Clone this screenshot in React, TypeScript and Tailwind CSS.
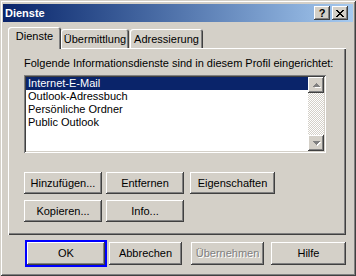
import React from "react";

const bevel =
  "shadow-[inset_-1px_-1px_#404040,inset_1px_1px_#ffffff,inset_-2px_-2px_#808080,inset_2px_2px_#d4d0c8]";

function Button({
  label,
  className = "",
  disabled = false,
}: {
  label: string;
  className?: string;
  disabled?: boolean;
}) {
  return (
    <div
      className={`flex items-center justify-center bg-[#d4d0c8] ${bevel} ${className}`}
    >
      <span
        className={
          disabled
            ? "text-[#808080] [text-shadow:1px_1px_0_#ffffff]"
            : "text-black"
        }
      >
        {label}
      </span>
    </div>
  );
}

function ScrollArrow({ up }: { up?: boolean }) {
  return (
    <div className={`flex h-[16px] w-[16px] items-center justify-center bg-[#d4d0c8] ${bevel}`}>
      <svg width="9" height="6" viewBox="0 0 9 6">
        {up ? (
          <>
            <path d="M4 1h1v1h1v1h1v1h1v1H2V4h1V3h1z" fill="#ffffff" transform="translate(1 1)" />
            <path d="M4 1h1v1h1v1h1v1h1v1H1V4h1V3h1V2h1z" fill="#808080" />
          </>
        ) : (
          <>
            <path d="M1 1h7v1H7v1H6v1H5v1H4V4H3V3H2V2H1z" fill="#ffffff" transform="translate(1 1)" />
            <path d="M1 1h7v1H7v1H6v1H5v1H4V4H3V3H2V2H1z" fill="#808080" />
          </>
        )}
      </svg>
    </div>
  );
}

function Tab({
  label,
  active,
  className,
}: {
  label: string;
  active?: boolean;
  className: string;
}) {
  return (
    <div
      className={`flex items-center justify-center rounded-t-[3px] bg-[#d4d0c8] shadow-[inset_1px_1px_#ffffff,inset_-1px_0_#404040,inset_-2px_0_#808080] ${
        active ? "z-10 mb-[-1px] h-[22px] pb-[3px]" : "h-[19px] pt-[1px]"
      } ${className}`}
    >
      {label}
    </div>
  );
}

export default function App() {
  const items = ["Internet-E-Mail", "Outlook-Adressbuch", "Persönliche Ordner", "Public Outlook"];

  return (
    <div
      className="flex h-[276px] w-[356px] flex-col bg-[#d4d0c8] px-[3px] pt-[4px] text-[11px] leading-[13px] text-black shadow-[inset_1px_1px_#d4d0c8,inset_-1px_-1px_#404040,inset_2px_2px_#ffffff,inset_-2px_-2px_#808080]"
      style={{ fontFamily: '"Liberation Sans", Arial, sans-serif' }}
    >
      {/* Title bar */}
      <div className="flex h-[18px] items-center justify-between bg-gradient-to-r from-[#0a246a] to-[#a6caf0] pl-[2px] pr-[5px]">
        <span className="font-bold text-white">Dienste</span>
        <div className="flex gap-[2px]">
          <div className={`flex h-[14px] w-[16px] items-center justify-center bg-[#d4d0c8] font-bold ${bevel}`}>
            ?
          </div>
          <div className={`flex h-[14px] w-[16px] items-center justify-center bg-[#d4d0c8] ${bevel}`}>
            <svg width="8" height="7" viewBox="0 0 8 7">
              <path d="M0 0L7 7M1 0L8 7M7 0L0 7M8 0L1 7" stroke="#000" strokeWidth="1" />
            </svg>
          </div>
        </div>
      </div>

      <div className="flex flex-col pl-[5px] pt-[5px]">
        {/* Tabs */}
        <div className="flex h-[21px] items-end">
          <Tab label="Dienste" active className="w-[53px]" />
          <Tab label="Übermittlung" className="w-[68px]" />
          <Tab label="Adressierung" className="ml-[1px] w-[73px]" />
        </div>

        {/* Tab panel */}
        <div className="flex h-[187px] w-[338px] flex-col pl-[16px] pt-[9px] shadow-[inset_1px_1px_#ffffff,inset_-1px_-1px_#404040,inset_-2px_-2px_#808080]">
          <div>Folgende Informationsdienste sind in diesem Profil eingerichtet:</div>

          <div className="mt-[5px] flex h-[78px] w-[302px] bg-white p-[2px] shadow-[inset_1px_1px_#808080,inset_-1px_-1px_#ffffff,inset_2px_2px_#404040,inset_-2px_-2px_#d4d0c8]">
            <div className="flex flex-1 flex-col">
              {items.map((it, i) => (
                <div
                  key={it}
                  className={`h-[13px] pl-[2px] ${i === 0 ? "bg-[#0a246a] text-white" : ""}`}
                >
                  {it}
                </div>
              ))}
            </div>
            <div className="flex w-[16px] flex-col bg-[image:repeating-conic-gradient(#ffffff_0_25%,#d4d0c8_0_50%)] bg-[length:2px_2px]">
              <ScrollArrow up />
              <div className="flex-1" />
              <ScrollArrow />
            </div>
          </div>

          <div className="mt-[19px] flex">
            <Button label="Hinzufügen..." className="h-[22px] w-[78px]" />
            <Button label="Entfernen" className="ml-[4px] h-[22px] w-[78px]" />
            <Button label="Eigenschaften" className="ml-[6px] h-[22px] w-[85px]" />
          </div>
          <div className="mt-[6px] flex">
            <Button label="Kopieren..." className="h-[22px] w-[78px]" />
            <Button label="Info..." className="ml-[4px] h-[22px] w-[78px]" />
          </div>
        </div>

        {/* Dialog buttons */}
        <div className="mt-[5px] flex items-center">
          <div className="ml-[17px] border-[2px] border-[#0000ff]">
            <Button label="OK" className="h-[23px] w-[78px]" />
          </div>
          <Button label="Abbrechen" className="ml-[2px] h-[23px] w-[73px]" />
          <Button label="Übernehmen" disabled className="ml-[9px] h-[23px] w-[73px]" />
          <Button label="Hilfe" className="ml-[7px] h-[23px] w-[75px]" />
        </div>
      </div>
    </div>
  );
}
